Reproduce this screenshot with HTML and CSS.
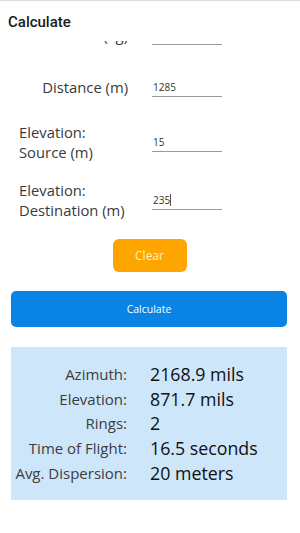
FILE: index.html
```html
<!DOCTYPE html>
<html>
<head>
<meta charset="utf-8">
<link rel="stylesheet" href="styles.css">
</head>
<body>
<header class="appbar">Calculate</header>
<main class="scroll">
  <div class="content">
    <div class="form">
      <div class="row">
        <div class="label label--end">Mass (kg)</div>
        <div class="field"></div>
      </div>
      <div class="row">
        <div class="label label--end">Distance (m)</div>
        <div class="field">1285</div>
      </div>
      <div class="row">
        <div class="label">Elevation:<br>Source (m)</div>
        <div class="field">15</div>
      </div>
      <div class="row">
        <div class="label">Elevation:<br>Destination (m)</div>
        <div class="field">235<span class="caret"></span></div>
      </div>
    </div>
    <div class="actions">
      <button class="btn-clear">Clear</button>
    </div>
    <button class="btn-calc">Calculate</button>
    <section class="results">
      <div class="res-label">Azimuth:</div><div class="res-value">2168.9 mils</div>
      <div class="res-label">Elevation:</div><div class="res-value">871.7 mils</div>
      <div class="res-label">Rings:</div><div class="res-value">2</div>
      <div class="res-label">Time of Flight:</div><div class="res-value">16.5 seconds</div>
      <div class="res-label">Avg. Dispersion:</div><div class="res-value">20 meters</div>
    </section>
  </div>
</main>
</body>
</html>
```

FILE: styles.css
```css
html, body {
  margin: 0;
  padding: 0;
  background: #ffffff;
}
body {
  width: 300px;
  height: 533px;
  overflow: hidden;
  display: flex;
  flex-direction: column;
  font-family: "Open Sans", "Liberation Sans", sans-serif;
  color: #3a3a3a;
}
.appbar {
  flex: 0 0 auto;
  height: 41px;
  box-sizing: border-box;
  border-top: 1px solid #dcdcdc;
  padding: 12px 0 0 8px;
  font-family: Roboto, "Liberation Sans", sans-serif;
  font-weight: 500;
  font-size: 15px;
  line-height: 18px;
  color: #1a1a1a;
  background: #ffffff;
  position: relative;
  z-index: 1;
}
.scroll {
  flex: 1 1 auto;
  overflow: hidden;
}
.content {
  margin-top: -23px;
  display: flex;
  flex-direction: column;
  gap: 19px;
}
.form {
  display: flex;
  flex-direction: column;
  gap: 18px;
}
.row {
  display: flex;
  align-items: center;
  min-height: 34px;
  padding-left: 19px;
  gap: 24px;
}
.label {
  width: 109px;
  font-size: 14.8px;
  line-height: 20px;
  color: #3a3a3a;
  white-space: nowrap;
}
.label--end {
  text-align: right;
}
.field {
  width: 69px;
  height: 19px;
  line-height: 18px;
  font-size: 10px;
  color: #333;
  padding-left: 1px;
  box-sizing: content-box;
  border-bottom: 1px solid #9a9a9a;
  display: flex;
  align-items: center;
}
.caret {
  display: inline-block;
  width: 0;
  height: 12px;
  border-left: 1px solid #555;
}
.actions {
  display: flex;
  justify-content: center;
}
.btn-clear {
  margin-left: -1px;
  width: 74px;
  height: 33px;
  border: none;
  border-radius: 6px;
  background: #ffa500;
  color: #fff2cc;
  font-family: "Open Sans", "Liberation Sans", sans-serif;
  font-size: 12px;
  padding: 0;
}
.btn-calc {
  margin-left: 11px;
  width: 276px;
  height: 36px;
  border: none;
  border-radius: 5px;
  background: #0a84e4;
  color: #ffffff;
  font-family: "Open Sans", "Liberation Sans", sans-serif;
  font-size: 10.5px;
  padding: 0;
}
.results {
  margin: 1px 0 0 11px;
  width: 276px;
  box-sizing: border-box;
  background: #cde6fa;
  padding: 15px 0 15px 0;
  display: grid;
  grid-template-columns: 116px 1fr;
  column-gap: 23px;
  grid-auto-rows: 24.6px;
  align-items: center;
}
.res-label {
  text-align: right;
  font-size: 15px;
  color: #3d3d3d;
  white-space: nowrap;
}
.res-value {
  font-size: 17.8px;
  color: #111;
  white-space: nowrap;
}
```
